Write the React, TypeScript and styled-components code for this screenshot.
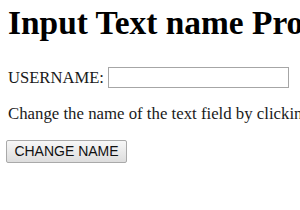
import React from "react";
import styled, { createGlobalStyle } from "styled-components";

const Global = createGlobalStyle`
  html, body {
    margin: 0;
    padding: 0;
    background: #ffffff;
    overflow: hidden;
  }
  body {
    font-family: "Liberation Serif", "Times New Roman", serif;
    color: #111;
  }
`;

const Page = styled.div`
  padding: 4px 0 0 8px;
  width: 292px;
  height: 206px;
  overflow: hidden;
`;

const Title = styled.h1`
  margin: 0 0 25px 0;
  font-family: "Liberation Serif", "Times New Roman", serif;
  font-size: 33.4px;
  font-weight: bold;
  line-height: normal;
  color: #000;
  white-space: nowrap;
`;

const FieldRow = styled.div`
  display: flex;
  align-items: center;
  gap: 4px;
  height: 21px;
  white-space: nowrap;
`;

const Label = styled.label`
  font-family: "Liberation Serif", "Times New Roman", serif;
  font-size: 16.6px;
  color: #1a1a1a;
`;

const TextInput = styled.input`
  box-sizing: border-box;
  width: 181px;
  height: 21px;
  margin: 0;
  padding: 1px 2px;
  border: 1px solid #a6a6a6;
  background: #fff;
  font-family: "Liberation Sans", Arial, sans-serif;
  font-size: 13px;
  outline: none;
`;

const Text = styled.p`
  margin: 16px 0 15.5px 0;
  font-size: 16.8px;
  line-height: normal;
  color: #1a1a1a;
  white-space: nowrap;
`;

const Button = styled.button`
  box-sizing: border-box;
  margin-left: -2px;
  width: 121px;
  height: 23px;
  padding: 0 6px;
  border: 1px solid #a9a9a9;
  border-radius: 2px;
  background: linear-gradient(#f7f7f7, #dddddd);
  font-family: "Liberation Sans", Arial, sans-serif;
  font-size: 14px;
  color: #111;
  white-space: nowrap;
`;

export default function App() {
  return (
    <>
      <Global />
      <Page>
        <Title>Input Text name Property</Title>
        <FieldRow>
          <Label htmlFor="uname">USERNAME:</Label>
          <TextInput id="uname" type="text" name="myText" />
        </FieldRow>
        <Text>Change the name of the text field by clicking the button.</Text>
        <Button type="button">CHANGE NAME</Button>
      </Page>
    </>
  );
}
